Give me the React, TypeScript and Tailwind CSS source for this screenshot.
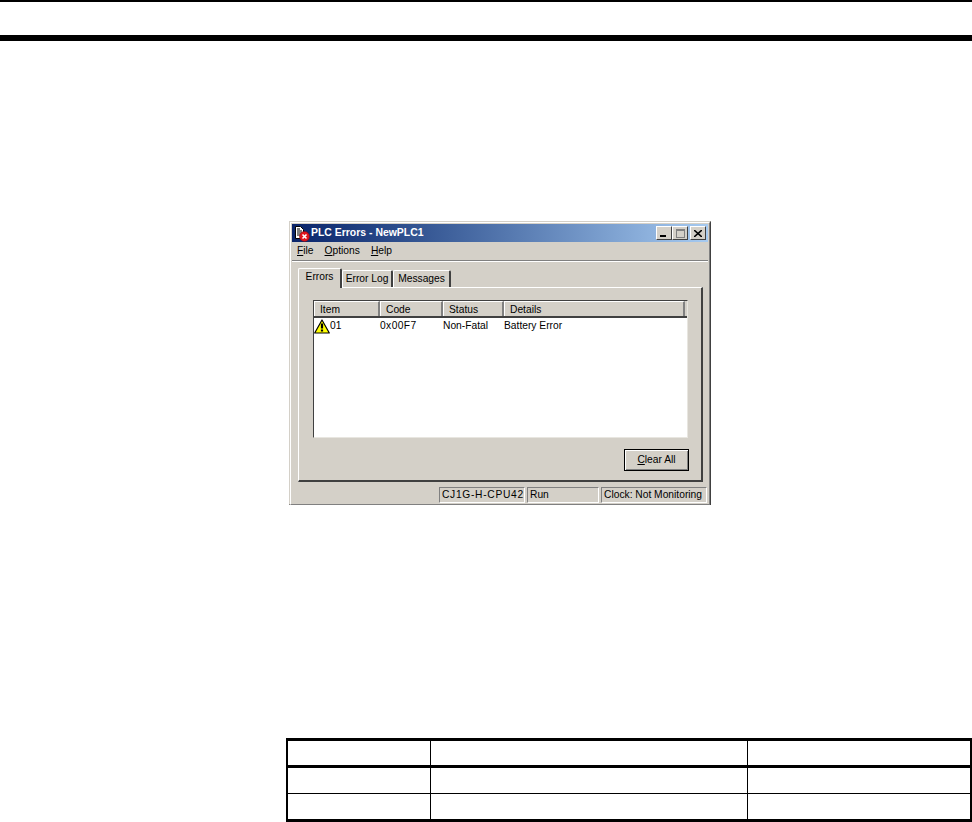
import type { ReactNode } from 'react';

const COLUMNS = [
  { label: 'Item', width: 'w-[66px]' },
  { label: 'Code', width: 'w-[63px]' },
  { label: 'Status', width: 'w-[61px]' },
  { label: 'Details', width: 'flex-1' },
];

// Win2k style raised edge
const RAISED = 'border border-t-white border-l-white border-r-[#404040] border-b-[#404040]';

const TitleIcon = () => (
  <svg width="18" height="17" viewBox="0 0 18 17" className="shrink-0">
    <path d="M2.5 1.5h5l3 3v9h-8z" fill="#fff" stroke="#000" />
    <path d="M4 4h3M4 6h5M4 8h5M4 10h4" stroke="#000" />
    <circle cx="11.5" cy="11.5" r="5" fill="#e0141c" stroke="#7a0a10" strokeWidth="0.5" />
    <path d="M9.5 9.5l4 4M13.5 9.5l-4 4" stroke="#fff" strokeWidth="1.6" />
  </svg>
);

const WarningIcon = () => (
  <svg width="16" height="15" viewBox="0 0 16 15" className="shrink-0">
    <path d="M8 1L15.3 14H.7z" fill="#ffff00" stroke="#000" strokeWidth="1.2" strokeLinejoin="round" />
    <path d="M8 4.5v5" stroke="#000" strokeWidth="2.2" />
    <path d="M8 10.5v2" stroke="#000" strokeWidth="2.2" />
  </svg>
);

const CaptionButton = ({ children, className = '' }: { children: ReactNode; className?: string }) => (
  <div className={`w-[16px] h-[14px] bg-[#d4d0c8] flex items-center justify-center ${RAISED} ${className}`}>
    {children}
  </div>
);

const Tab = ({ label, width, active }: { label: string; width: string; active?: boolean }) => (
  <div
    className={`${width} flex items-center justify-center bg-[#d4d0c8] border-t border-l border-t-white border-l-white border-r-2 border-r-[#404040] rounded-t-[2px] ${
      active ? 'h-[20px] -mb-px z-10 pb-[3px]' : 'h-[17px] pt-[1px]'
    }`}
  >
    {label}
  </div>
);

const StatusPanel = ({ label, width, className = '' }: { label: string; width: string; className?: string }) => (
  <div className={`${width} ${className} h-[16px] pl-[2px] pt-[1px] flex items-center border border-t-[#808080] border-l-[#808080] border-r-white border-b-white whitespace-nowrap overflow-hidden`}>
    {label}
  </div>
);

const PlcErrorsWindow = () => (
  <div className="ml-[289px] mt-[180px] w-[422px] h-[284px] flex flex-col bg-[#d4d0c8] border border-t-[#d4d0c8] border-l-[#d4d0c8] border-r-[#404040] border-b-[#404040] text-[10.25px] leading-none text-black font-['Liberation_Sans',sans-serif]">
    <div className="flex-1 flex flex-col border border-t-white border-l-white border-r-[#808080] border-b-[#808080] p-px">
      {/* Title bar */}
      <div className="h-[18px] flex items-center pl-[1px] pr-[2px] bg-gradient-to-r from-[#0a246a] to-[#a6caf0]">
        <TitleIcon />
        <span className="font-bold text-white text-[10.45px]">PLC Errors - NewPLC1</span>
        <div className="ml-auto flex items-center">
          <CaptionButton>
            <div className="w-[6px] h-[2px] bg-black mt-[6px] mr-[2px]" />
          </CaptionButton>
          <CaptionButton className="mr-[2px]">
            <div className="w-[9px] h-[9px] border border-t-2 border-[#808080]" />
          </CaptionButton>
          <CaptionButton>
            <svg width="8" height="7" viewBox="0 0 8 7">
              <path d="M0 0l8 7M8 0L0 7" stroke="#000" strokeWidth="1.6" />
            </svg>
          </CaptionButton>
        </div>
      </div>

      {/* Menu */}
      <div className="h-[19px] pt-[1px] flex items-center gap-[11px] pl-[5px] border-b border-b-[#808080] shadow-[0_1px_0_#fff]">
        <span><u>F</u>ile</span>
        <span><u>O</u>ptions</span>
        <span><u>H</u>elp</span>
      </div>

      {/* Tabs */}
      <div className="mt-[7px] ml-[6px] mr-[5px] flex items-end h-[19px]">
        <Tab label="Errors" width="w-[44px]" active />
        <Tab label="Error Log" width="w-[51px]" />
        <Tab label="Messages" width="w-[58px]" />
      </div>

      {/* Tab panel */}
      <div className="ml-[6px] mr-[5px] h-[195px] flex flex-col border border-t-white border-l-white border-r-2 border-b-2 border-r-[#404040] border-b-[#404040] pt-[12px] pl-[14px] pr-[13px]">
        <div className="h-[138px] flex flex-col bg-white border border-t-[#404040] border-l-[#404040] border-r-[#e8e6e0] border-b-[#e8e6e0]">
          <div className="h-[17px] flex shrink-0 border-b-2 border-b-[#404040] bg-[#d4d0c8] pr-[2px]">
            {COLUMNS.map((col) => (
              <div
                key={col.label}
                className={`${col.width} flex items-center pl-[5px] pt-[2px] border-t border-l border-t-white border-l-white border-r-2 border-r-[#808080]`}
              >
                {col.label}
              </div>
            ))}
          </div>
          <div className="h-[16px] flex items-center">
            <div className="w-[66px] flex items-center">
              <WarningIcon />
              <span>01</span>
            </div>
            <div className="w-[63px] tracking-[0.4px]">0x00F7</div>
            <div className="w-[61px]">Non-Fatal</div>
            <div>Battery Error</div>
          </div>
        </div>
        <div className="mt-[11px] mr-[-1px] flex justify-end">
          <div className="w-[65px] h-[22px] flex items-center justify-center border border-black bg-[#d4d0c8] shadow-[inset_1px_1px_0_#fff,inset_-1px_-1px_0_#808080]">
            <span><u>C</u>lear All</span>
          </div>
        </div>
      </div>

      {/* Status bar */}
      <div className="mt-[5px] flex justify-end gap-[2px] pr-[1px]">
        <StatusPanel label="CJ1G-H-CPU42" width="w-[86px]" className="tracking-[0.7px]" />
        <StatusPanel label="Run" width="w-[72px]" />
        <StatusPanel label="Clock: Not Monitoring" width="w-[106px]" />
      </div>
    </div>
  </div>
);

const TableRow = ({ className }: { className: string }) => (
  <div className={`flex ${className}`}>
    <div className="w-[143px] border-r border-r-black" />
    <div className="w-[317px] border-r border-r-black" />
    <div className="flex-1" />
  </div>
);

export default function App() {
  return (
    <div className="w-[972px] h-[822px] overflow-hidden bg-white flex flex-col">
      <div className="h-[2px] bg-black" />
      <div className="mt-[33px] h-[6px] bg-black" />
      <PlcErrorsWindow />
      <div className="ml-[286px] mt-[233px] w-[686px] flex flex-col border-y-[3px] border-x-[2px] border-black">
        <TableRow className="h-[27px] border-b-[3px] border-b-black" />
        <TableRow className="h-[26px] border-b border-b-black" />
        <TableRow className="h-[25px]" />
      </div>
    </div>
  );
}
